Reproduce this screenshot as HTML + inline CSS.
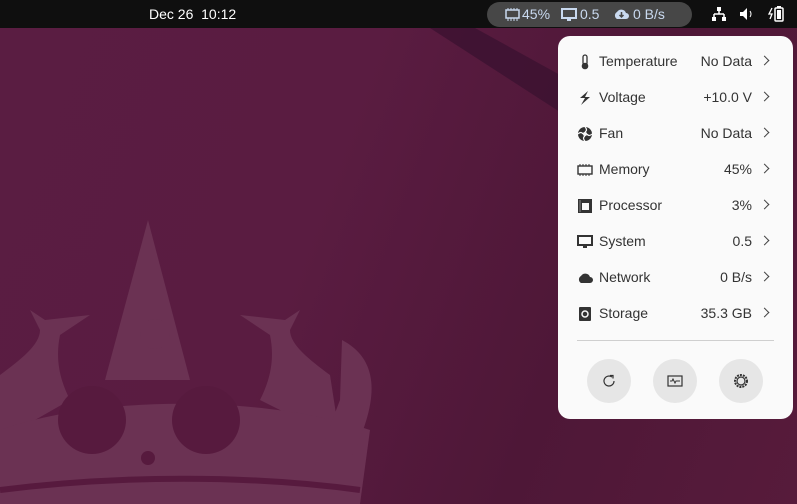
<!DOCTYPE html>
<html><head><meta charset="utf-8"><style>
*{margin:0;padding:0;box-sizing:border-box}
body{width:797px;height:504px;overflow:hidden;position:relative;font-family:"Liberation Sans","DejaVu Sans",sans-serif;background:#571b3f}
.bg{position:absolute;inset:0;background:linear-gradient(110deg,#5a1d42 0%,#5a1c41 40%,#4e1737 70%,#571b3b 100%)}
.top{position:absolute;left:0;top:0;width:797px;height:28px;background:#0f0f0f;color:#fff;font-size:14px}
.date{position:absolute;left:149px;top:6px}
.pill{position:absolute;left:487px;top:2px;width:205px;height:25px;border-radius:13px;background:#474747;color:#c9d9ef;font-size:14px}
.pill span{position:absolute;top:4px}
.panel{position:absolute;left:558px;top:36px;width:235px;height:383px;background:#fafafa;border-radius:12px;color:#333}
.row{position:absolute;left:0;width:235px;height:24px;font-size:14px}
.row .ic{position:absolute;left:19px;top:4px;width:16px;height:16px}
.row .l{position:absolute;left:41px;top:3px}
.row .v{position:absolute;right:41px;top:3px}
.row .c{position:absolute;left:203px;top:7px;width:7px;height:7px;border-right:1.5px solid #444;border-top:1.5px solid #444;transform:rotate(45deg)}
.sep{position:absolute;left:19px;top:304px;width:197px;height:1px;background:#cfcfcf}
.btn{position:absolute;top:323px;width:44px;height:44px;border-radius:50%;background:#e6e6e6}
.btn svg{position:absolute;left:14px;top:14px}
</style></head><body>
<div class="bg"></div>
<svg style="position:absolute;left:0;top:0" width="797" height="504">
<polygon points="430,28 475,28 560,75 560,112" fill="#3a1130" opacity=".75"/>
<g fill="#6b3253">
<polygon points="148,220 105,380 190,380"/>
<path d="M0,375 C20,360 40,345 40,330 L30,310 L45,320 L90,315 L60,335 C55,360 60,380 70,400 L0,440Z"/>
<path d="M330,375 C310,360 290,345 290,330 L300,310 L285,320 L240,315 L270,335 C275,360 270,380 260,400 L340,440Z"/>
<circle cx="155" cy="334" r="15"/>
<path d="M0,430 C100,395 260,395 370,430 L360,504 L0,504Z"/>
<path d="M342,340 C380,360 380,400 350,460 L330,504 L300,504 L340,400 Z"/>
</g>
<g fill="#571a3e"><circle cx="92" cy="420" r="34"/><circle cx="206" cy="420" r="34"/><circle cx="148" cy="458" r="7"/></g>
<path d="M0,490 C120,475 250,475 360,490" stroke="#571a3e" stroke-width="6" fill="none"/>
</svg>
<div class="top">
<div class="date">Dec 26&nbsp;&nbsp;10:12</div>
<div class="pill">
<svg style="position:absolute;left:18px;top:6px" width="15" height="13"><rect x="1" y="2" width="13" height="8" fill="none" stroke="#c9d9ef" stroke-width="1.5"/><path d="M3 0v2M6 0v2M9 0v2M12 0v2M3 10v3M6 10v3M9 10v3M12 10v3" stroke="#c9d9ef"/></svg>
<span style="left:35px">45%</span>
<svg style="position:absolute;left:74px;top:6px" width="16" height="14"><rect x="1" y="1" width="14" height="9" fill="none" stroke="#c9d9ef" stroke-width="2"/><rect x="6" y="11" width="4" height="2" fill="#c9d9ef"/></svg>
<span style="left:93px">0.5</span>
<svg style="position:absolute;left:126px;top:7px" width="17" height="11"><path d="M4 10a4 4 0 0 1 0-7a5 5 0 0 1 9 1a3 3 0 0 1 0 6Z" fill="#c9d9ef"/><path d="M8.5 3v5M6.5 6l2 2 2-2" stroke="#474747" stroke-width="1.5" fill="none"/></svg>
<span style="left:146px">0 B/s</span>
</div>
<svg style="position:absolute;left:711px;top:7px" width="16" height="14"><rect x="6" y="0" width="4" height="4" fill="#fff"/><path d="M8 4v3M3 7h10M3 7v3M13 7v3" stroke="#fff" stroke-width="1.5"/><rect x="1" y="10" width="4" height="4" fill="#fff"/><rect x="11" y="10" width="4" height="4" fill="#fff"/></svg>
<svg style="position:absolute;left:739px;top:7px" width="16" height="14"><path d="M1 5h3l4-4v12l-4-4H1Z" fill="#fff"/><path d="M11 4q2 3 0 6" stroke="#fff" fill="none"/></svg>
<svg style="position:absolute;left:767px;top:5px" width="18" height="18"><path d="M5 3L2 9h3l-2 5" stroke="#fff" stroke-width="1.3" fill="none"/><rect x="8" y="3" width="8" height="13" rx="1" fill="none" stroke="#fff" stroke-width="1.5"/><rect x="10" y="1" width="4" height="2" fill="#fff"/><rect x="10" y="5" width="4" height="9" fill="#fff"/></svg>
</div>
<div class="panel">
<div class="row" style="top:14px"><svg class="ic" viewBox="0 0 16 16"><rect x="6" y="1" width="4" height="10" rx="2" fill="none" stroke="#333" stroke-width="1.3"/><circle cx="8" cy="12" r="3.3" fill="#333"/></svg><span class="l">Temperature</span><span class="v">No Data</span><i class="c"></i></div>
<div class="row" style="top:50px"><svg class="ic" viewBox="0 0 16 16"><path d="M11 1L3 8h5l-4 7 9-8H8z" fill="#333"/></svg><span class="l">Voltage</span><span class="v">+10.0 V</span><i class="c"></i></div>
<div class="row" style="top:86px"><svg class="ic" viewBox="0 0 16 16"><circle cx="8" cy="8" r="7" fill="#333"/><circle cx="8" cy="8" r="2" fill="#fafafa"/><path d="M8 1q3 3 0 5M15 8q-3 3-5 0M8 15q-3-3 0-5M1 8q3-3 5 0" stroke="#fafafa" stroke-width="1.2" fill="none"/></svg><span class="l">Fan</span><span class="v">No Data</span><i class="c"></i></div>
<div class="row" style="top:122px"><svg class="ic" viewBox="0 0 16 16"><rect x="1" y="4" width="14" height="8" fill="none" stroke="#333" stroke-width="1.4"/><path d="M3 2v2M6 2v2M9 2v2M12 2v2M3 12v2M6 12v2M9 12v2M12 12v2" stroke="#333"/></svg><span class="l">Memory</span><span class="v">45%</span><i class="c"></i></div>
<div class="row" style="top:158px"><svg class="ic" viewBox="0 0 16 16"><rect x="1" y="1" width="14" height="14" fill="#333"/><rect x="5" y="5" width="7" height="7" fill="#fafafa"/><path d="M3 2v12" stroke="#888"/></svg><span class="l">Processor</span><span class="v">3%</span><i class="c"></i></div>
<div class="row" style="top:194px"><svg class="ic" viewBox="0 0 16 16"><rect x="1" y="2" width="14" height="9" fill="none" stroke="#333" stroke-width="2"/><rect x="6" y="12" width="4" height="2" fill="#333"/></svg><span class="l">System</span><span class="v">0.5</span><i class="c"></i></div>
<div class="row" style="top:230px"><svg class="ic" viewBox="0 0 16 16"><path d="M4 13a4 4 0 0 1 0-7a5 5 0 0 1 9 1a3 3 0 0 1 0 6Z" fill="#333"/></svg><span class="l">Network</span><span class="v">0 B/s</span><i class="c"></i></div>
<div class="row" style="top:266px"><svg class="ic" viewBox="0 0 16 16"><rect x="2" y="1" width="12" height="14" rx="1" fill="#333"/><circle cx="8" cy="8" r="3" fill="none" stroke="#fafafa" stroke-width="1.5"/></svg><span class="l">Storage</span><span class="v">35.3 GB</span><i class="c"></i></div>
<div class="sep"></div>
<div class="btn" style="left:29px"><svg width="16" height="16"><path d="M13 8a5 5 0 1 1-2-4" stroke="#333" stroke-width="1.2" fill="none"/><path d="M9 2.5h3v3" stroke="#333" stroke-width="1.2" fill="none"/></svg></div>
<div class="btn" style="left:95px"><svg width="16" height="16"><rect x="1" y="3" width="14" height="10" fill="none" stroke="#333" stroke-width="1.2"/><path d="M3 8h2l1-2 2 4 1-2h4" stroke="#333" fill="none"/></svg></div>
<div class="btn" style="left:161px"><svg width="16" height="16"><circle cx="8" cy="8" r="6" fill="none" stroke="#333" stroke-width="2" stroke-dasharray="2 1"/><circle cx="8" cy="8" r="4" fill="none" stroke="#333" stroke-width="1.2"/></svg></div>
</div>
</body></html>
